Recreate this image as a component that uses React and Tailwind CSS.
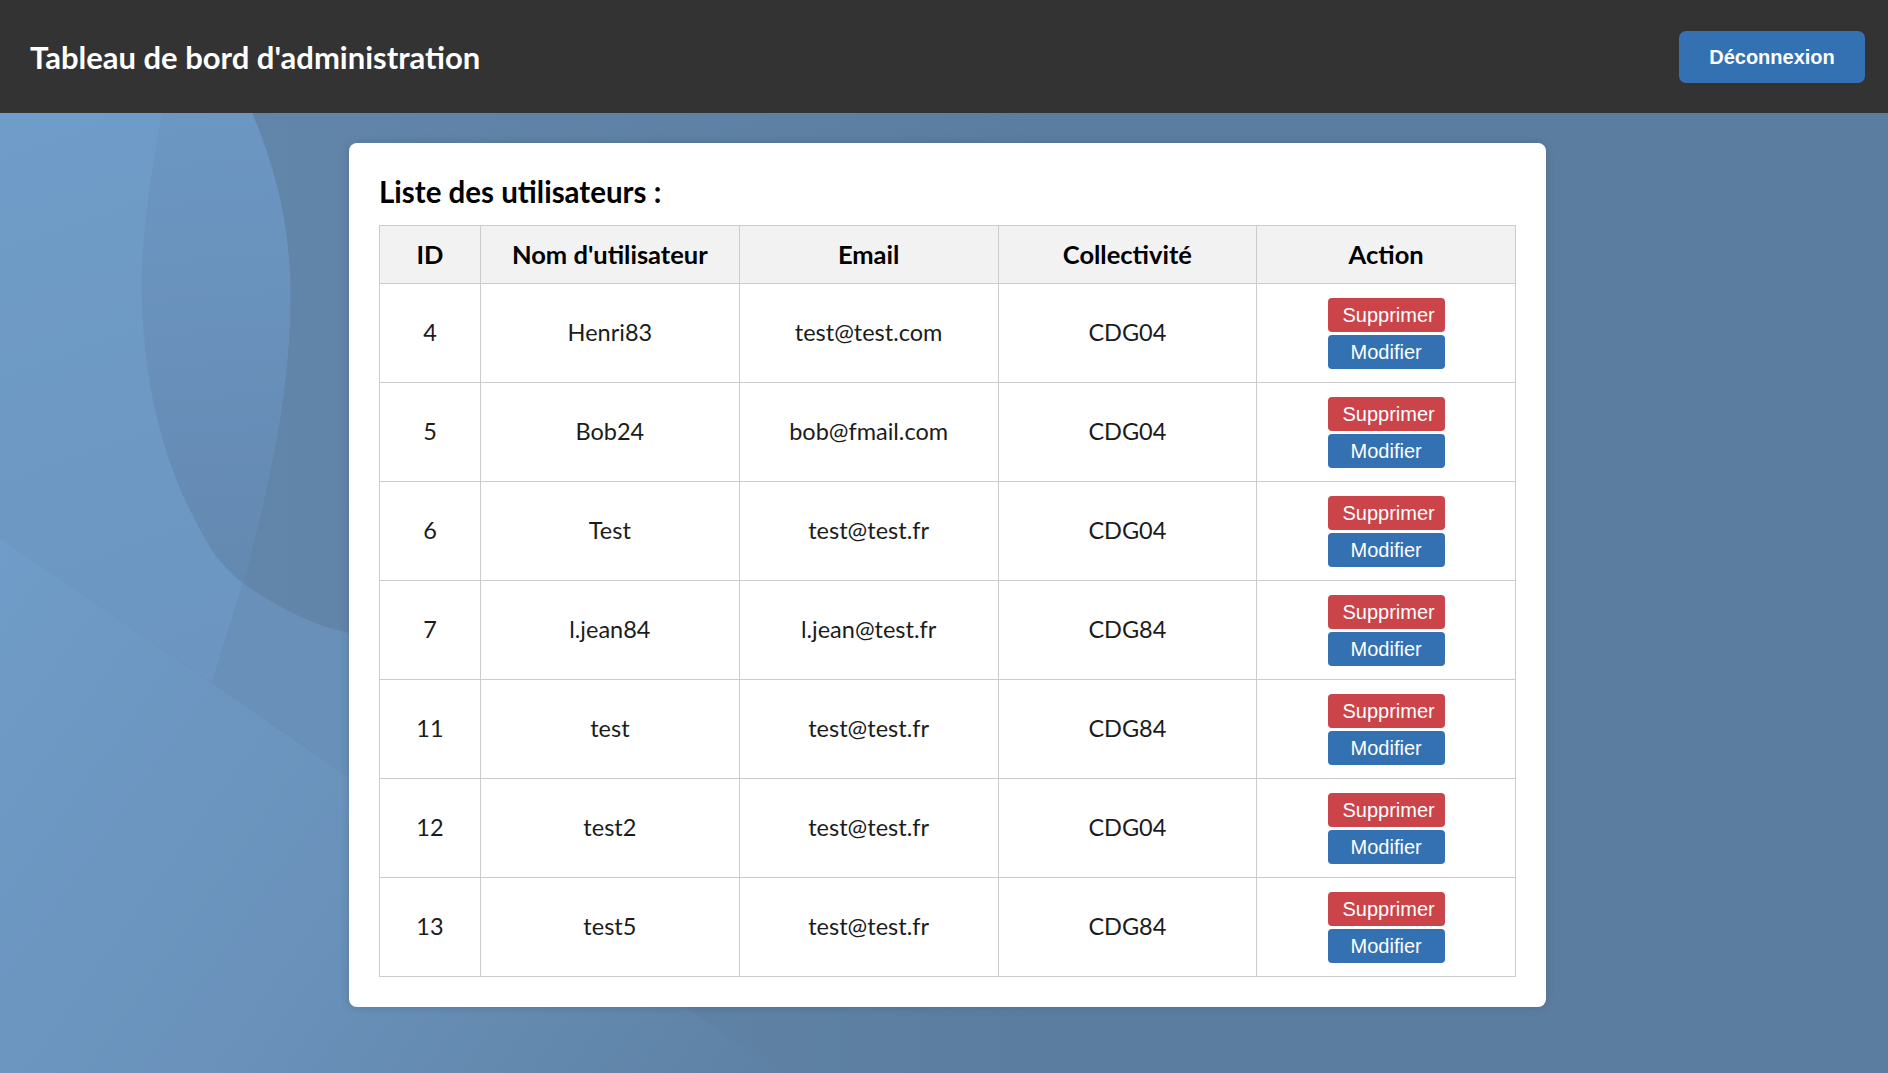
import React from "react";

const rows = [
  { id: 4, name: "Henri83", email: "test@test.com", col: "CDG04" },
  { id: 5, name: "Bob24", email: "bob@fmail.com", col: "CDG04" },
  { id: 6, name: "Test", email: "test@test.fr", col: "CDG04" },
  { id: 7, name: "l.jean84", email: "l.jean@test.fr", col: "CDG84" },
  { id: 11, name: "test", email: "test@test.fr", col: "CDG84" },
  { id: 12, name: "test2", email: "test@test.fr", col: "CDG04" },
  { id: 13, name: "test5", email: "test@test.fr", col: "CDG84" },
];

function Background() {
  return (
    <svg
      className="absolute inset-0 w-full h-full"
      viewBox="0 113 1888 960"
      preserveAspectRatio="none"
    >
      <defs>
        <linearGradient id="base" x1="0" y1="0" x2="1" y2="0">
          <stop offset="0" stopColor="#6488ad" />
          <stop offset="0.55" stopColor="#5b7ea0" />
          <stop offset="1" stopColor="#5b7ea0" />
        </linearGradient>
        <linearGradient id="lightA" gradientUnits="userSpaceOnUse" x1="0" y1="113" x2="200" y2="680">
          <stop offset="0" stopColor="#6f9cc8" />
          <stop offset="1" stopColor="#6c96c1" />
        </linearGradient>
        <linearGradient id="midB" gradientUnits="userSpaceOnUse" x1="200" y1="113" x2="240" y2="580">
          <stop offset="0" stopColor="#6c97c3" />
          <stop offset="1" stopColor="#6489b1" />
        </linearGradient>
        <linearGradient id="lightD" gradientUnits="userSpaceOnUse" x1="0" y1="540" x2="760" y2="1073">
          <stop offset="0" stopColor="#6f9cc8" />
          <stop offset="0.5" stopColor="#6a92bb" />
          <stop offset="1" stopColor="#5e82a5" />
        </linearGradient>
      </defs>
      <rect x="0" y="113" width="1888" height="960" fill="url(#base)" />
      <path
        d="M0,113 L252,113 C280,180 292,240 290,310 C288,400 270,480 243,583 L212,683 L0,538 Z"
        fill="url(#lightA)"
      />
      <path
        d="M162,113 L252,113 C280,180 292,240 290,310 C288,400 270,480 243,583 C235,578 228,570 215,555 C180,500 145,420 142,300 C140,250 148,190 162,113 Z"
        fill="url(#midB)"
      />
      <path
        d="M243,583 C275,605 310,625 349,633 L600,645 L600,949 L212,683 Z"
        fill="#6890b9"
      />
      <path d="M0,538 L781,1073 L0,1073 Z" fill="url(#lightD)" />
    </svg>
  );
}

export default function App() {
  return (
    <div className="min-h-screen h-[1073px] flex flex-col font-[Lato,'Noto_Sans',sans-serif]">
      <header className="h-[113px] shrink-0 bg-[#333333] flex items-center justify-between pl-[30px] pr-[23px]">
        <h1 className="text-white font-bold text-[31px] leading-[36px]">
          Tableau de bord d'administration
        </h1>
        <button className="w-[186px] h-[52px] rounded-[7px] bg-[#3371b3] text-white font-bold text-[20px] font-['Liberation_Sans',Arial,sans-serif]">
          Déconnexion
        </button>
      </header>
      <main className="relative flex-1 overflow-hidden">
        <Background />
        <div className="relative pt-[30px] pl-[7px] flex justify-center">
          <div className="w-[1197px] bg-white rounded-lg shadow-[0_0_10px_rgba(0,0,0,0.15)] px-[30px] pt-[32px] pb-[30px]">
            <h2 className="font-bold text-[29.5px] leading-[34px] text-black mb-[16px]">
              Liste des utilisateurs :
            </h2>
            <table className="w-[1137px] table-fixed border-collapse text-black">
              <colgroup>
                <col className="w-[101px]" />
                <col />
                <col />
                <col />
                <col />
              </colgroup>
              <thead>
                <tr className="bg-[#f2f2f2]">
                  {["ID", "Nom d'utilisateur", "Email", "Collectivité", "Action"].map((h) => (
                    <th
                      key={h}
                      className="h-[58px] border border-[#cccccc] font-bold text-[25.5px] text-center align-middle"
                    >
                      {h}
                    </th>
                  ))}
                </tr>
              </thead>
              <tbody>
                {rows.map((r) => (
                  <tr key={r.id}>
                    <td className="h-[99px] border border-[#cccccc] text-[23.5px] text-center align-middle text-[#1c1c1c]">
                      {r.id}
                    </td>
                    <td className="border border-[#cccccc] text-[23.5px] text-center align-middle text-[#1c1c1c]">
                      {r.name}
                    </td>
                    <td className="border border-[#cccccc] text-[23.5px] text-center align-middle text-[#1c1c1c]">
                      {r.email}
                    </td>
                    <td className="border border-[#cccccc] text-[23.5px] text-center align-middle text-[#1c1c1c]">
                      {r.col}
                    </td>
                    <td className="border border-[#cccccc] align-middle">
                      <div className="flex flex-col items-center gap-[3px] font-['Liberation_Sans',Arial,sans-serif]">
                        <button className="w-[117px] h-[34px] rounded-[4px] bg-[#cb444a] text-white text-[20px] leading-[34px] pl-[5px]">
                          Supprimer
                        </button>
                        <button className="w-[117px] h-[34px] rounded-[4px] bg-[#3371b3] text-white text-[20px] leading-[34px]">
                          Modifier
                        </button>
                      </div>
                    </td>
                  </tr>
                ))}
              </tbody>
            </table>
          </div>
        </div>
      </main>
    </div>
  );
}
